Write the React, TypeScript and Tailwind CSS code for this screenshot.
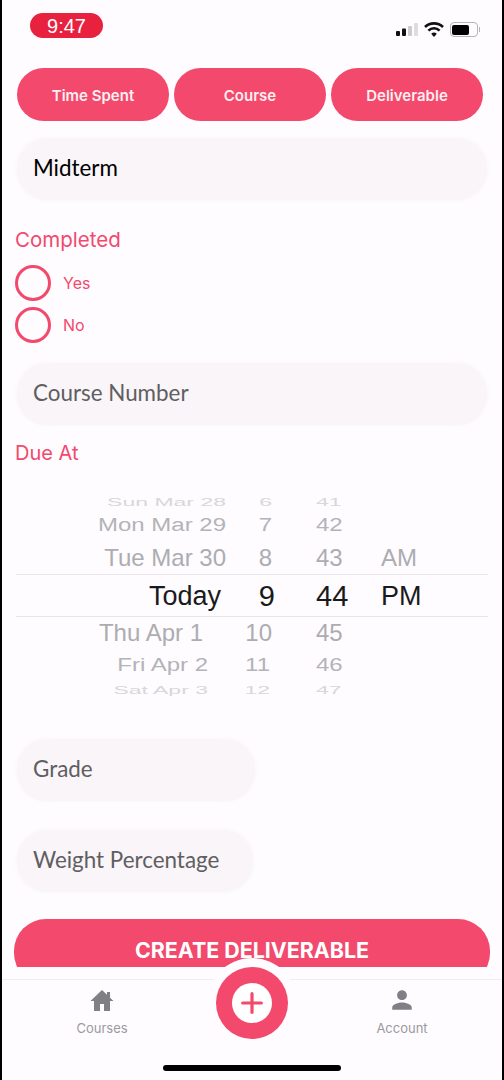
import { Plus } from "lucide-react";
import { IoMdPerson } from "react-icons/io";

const radioOptions = ["Yes", "No"];

type PickerRow = {
    date: string;
    hour: string;
    minute: string;
    period?: string;
    height: string;
    text: string;
    color: string;
    datePad: string;
    hourPad: string;
};

const pickerRows: PickerRow[] = [
    { date: "Sun Mar 28", hour: "6", minute: "41", height: "h-[16px]", text: "text-[23px] scale-y-[0.5]", color: "text-[#d8d7da]", datePad: "pr-0", hourPad: "pr-0" },
    { date: "Mon Mar 29", hour: "7", minute: "42", height: "h-[34px]", text: "text-[24px] scale-y-[0.8]", color: "text-[#b4b3b8]", datePad: "pr-0", hourPad: "pr-0" },
    { date: "Tue Mar 30", hour: "8", minute: "43", period: "AM", height: "h-[32px]", text: "text-[24px]", color: "text-[#adacb1]", datePad: "pr-0", hourPad: "pr-0" },
    { date: "Today", hour: "9", minute: "44", period: "PM", height: "h-[44px]", text: "text-[27px]", color: "text-[#1a1a1c]", datePad: "pr-[5px]", hourPad: "pr-0" },
    { date: "Thu Apr 1", hour: "10", minute: "45", height: "h-[29px]", text: "text-[24px]", color: "text-[#adacb1]", datePad: "pr-[23px]", hourPad: "pr-0" },
    { date: "Fri Apr 2", hour: "11", minute: "46", height: "h-[36px]", text: "text-[24px] scale-y-[0.8]", color: "text-[#b4b3b8]", datePad: "pr-[18px]", hourPad: "pr-[2px]" },
    { date: "Sat Apr 3", hour: "12", minute: "47", height: "h-[6px]", text: "text-[23px] scale-y-[0.5]", color: "text-[#d8d7da]", datePad: "pr-[18px]", hourPad: "pr-[2px]" },
];

function Field({ label, width, dark }: { label: string; width: string; dark?: boolean }) {
    return (
        <div className={`flex h-[62px] items-center rounded-[30px] bg-[#f9f5f8] px-4 pb-[2px] font-['Lato',sans-serif] text-[22.4px] shadow-[0_0_4px_#f9f5f8] ${width} ${dark ? "text-black" : "text-[#5f5e62]"}`}>
            {label}
        </div>
    );
}

export default function App() {
    return (
        <div className="flex h-[1080px] w-[504px] flex-col overflow-hidden border-x-2 border-black bg-[#fefcfe] font-['Inter',sans-serif]">
            <div className="flex-1 overflow-hidden">
                {/* status bar */}
                <div className="flex h-[68px] items-start justify-between pl-[28px] pr-[22px] pt-[13px]">
                    <div className="flex h-[25px] w-[73px] items-center justify-center rounded-full bg-[#e8213f] font-['Liberation_Sans',sans-serif] text-[20px] text-white">9:47</div>
                    <div className="mt-[9px] flex items-center gap-[6px]">
                        <svg width="22" height="15" viewBox="0 0 22 15">
                            <rect x="0" y="9" width="4" height="5" rx="1" fill="#111" />
                            <rect x="6" y="6.5" width="4" height="7.5" rx="1" fill="#111" />
                            <rect x="12" y="4" width="4" height="10" rx="1" fill="#ccc" />
                            <rect x="18" y="1" width="4" height="13" rx="1" fill="#ddd" />
                        </svg>
                        <svg width="20" height="15" viewBox="0 0 20 15" fill="none" stroke="#111" strokeWidth="2.6">
                            <path d="M1 5a13 13 0 0 1 18 0" />
                            <path d="M4.4 8.6a8 8 0 0 1 11.2 0" />
                            <path d="M10 15 7.2 11.8a4 4 0 0 1 5.6 0Z" fill="#111" stroke="none" />
                        </svg>
                        <div className="flex items-center">
                            <div className="flex h-[15px] w-[28px] items-center rounded-[4px] border border-[#b5b5b5] p-[1.5px]">
                                <div className="h-full w-[17px] rounded-[2px] bg-black" />
                            </div>
                            <div className="ml-[1px] h-[5px] w-[1.5px] bg-[#b5b5b5]" />
                        </div>
                    </div>
                </div>

                {/* type tabs */}
                <div className="flex gap-[5px] pl-[15px]">
                    {["Time Spent", "Course", "Deliverable"].map((tab) => (
                        <div key={tab} className="flex h-[53px] w-[152px] items-center justify-center rounded-full bg-[#f2496d] pt-[3px] text-[15px] font-semibold text-[#fdeef1]">
                            {tab}
                        </div>
                    ))}
                </div>

                <div className="pl-[15px] pt-[17px]">
                    <Field label="Midterm" width="w-[470px]" dark />
                </div>

                {/* completed */}
                <div className="pl-[13px] pt-[26px] text-[#f2496d]">
                    <div className="text-[20.5px] leading-[28px]">Completed</div>
                    <div className="mt-[11px] flex flex-col gap-[7px]">
                        {radioOptions.map((option) => (
                            <div key={option} className="flex h-[35px] items-center gap-[12px]">
                                <div className="h-[36px] w-[36px] rounded-full border-[3px] border-[#f2496d]" />
                                <span className="text-[16px]">{option}</span>
                            </div>
                        ))}
                    </div>
                </div>

                <div className="pl-[15px] pt-[21px]">
                    <Field label="Course Number" width="w-[470px]" />
                </div>

                <div className="pl-[13px] pt-[14px] text-[20px] leading-[28px] text-[#f2496d]">Due At</div>

                {/* date picker */}
                <div className="relative mt-[25px]">
                    {pickerRows.map((row) => (
                        <div key={row.date} className={`grid grid-cols-[224px_46px_74px_auto] items-center font-['Liberation_Sans',sans-serif] leading-none ${row.height} ${row.text} ${row.color}`}>
                            <span className={`text-right ${row.datePad}`}>{row.date}</span>
                            <span className={`text-right ${row.hourPad} ${row.date === "Today" ? "-mr-[3px] text-[29px]" : ""}`}>{row.hour}</span>
                            <span className={`pl-[44px] ${row.date === "Today" ? "text-[29px]" : ""}`}>{row.minute}</span>
                            <span className="pl-[35px]">{row.period}</span>
                        </div>
                    ))}
                    <div className="absolute left-[14px] right-[14px] top-[82px] h-[43px] border-y border-[#e8e6e9]" />
                </div>

                <div className="flex flex-col gap-[29px] pl-[15px] pt-[50px]">
                    <Field label="Grade" width="w-[238px]" />
                    <Field label="Weight Percentage" width="w-[236px]" />
                </div>

                <div className="pl-[12px] pt-[27px]">
                    <div className="flex h-[66px] w-[476px] items-start justify-center rounded-[32px] bg-[#f2496d] pt-[18px] text-[21.4px] font-bold leading-[26px] text-white">
                        CREATE DELIVERABLE
                    </div>
                </div>
            </div>

            {/* tab bar */}
            <div className="relative h-[113px] bg-[#fefcfe] pt-[12px]">
                <div className="flex h-full justify-between border-t border-[#efedf0] px-[60px] pt-[7px]">
                    <div className="flex w-[80px] flex-col items-center text-[13px] text-[#9b9a9f]">
                        <svg width="26" height="26" viewBox="0 0 26 26" fill="#807f85">
                            <path d="M13 3 1.5 14H5v10h6v-7h4v7h6V14h3.5L21 10.7V5h-3v2.8Z" />
                        </svg>
                        <span className="mt-[6px]">Courses</span>
                    </div>
                    <div className="flex w-[80px] flex-col items-center text-[13px] text-[#9b9a9f]">
                        <IoMdPerson size={26} color="#807f85" />
                        <span className="mt-[6px]">Account</span>
                    </div>
                </div>
                <div className="absolute left-[205px] top-[-9px] flex h-[90px] w-[90px] items-center justify-center rounded-full bg-[#fefcfe]">
                    <div className="flex h-[72px] w-[72px] items-center justify-center rounded-full bg-[#f2496d]">
                        <div className="flex h-[40px] w-[40px] items-center justify-center rounded-full bg-white">
                            <Plus size={32} stroke="#f2496d" strokeWidth={2.4} />
                        </div>
                    </div>
                </div>
                <div className="absolute bottom-[9px] left-[161px] h-[6px] w-[178px] rounded-full bg-black" />
            </div>
        </div>
    );
}
